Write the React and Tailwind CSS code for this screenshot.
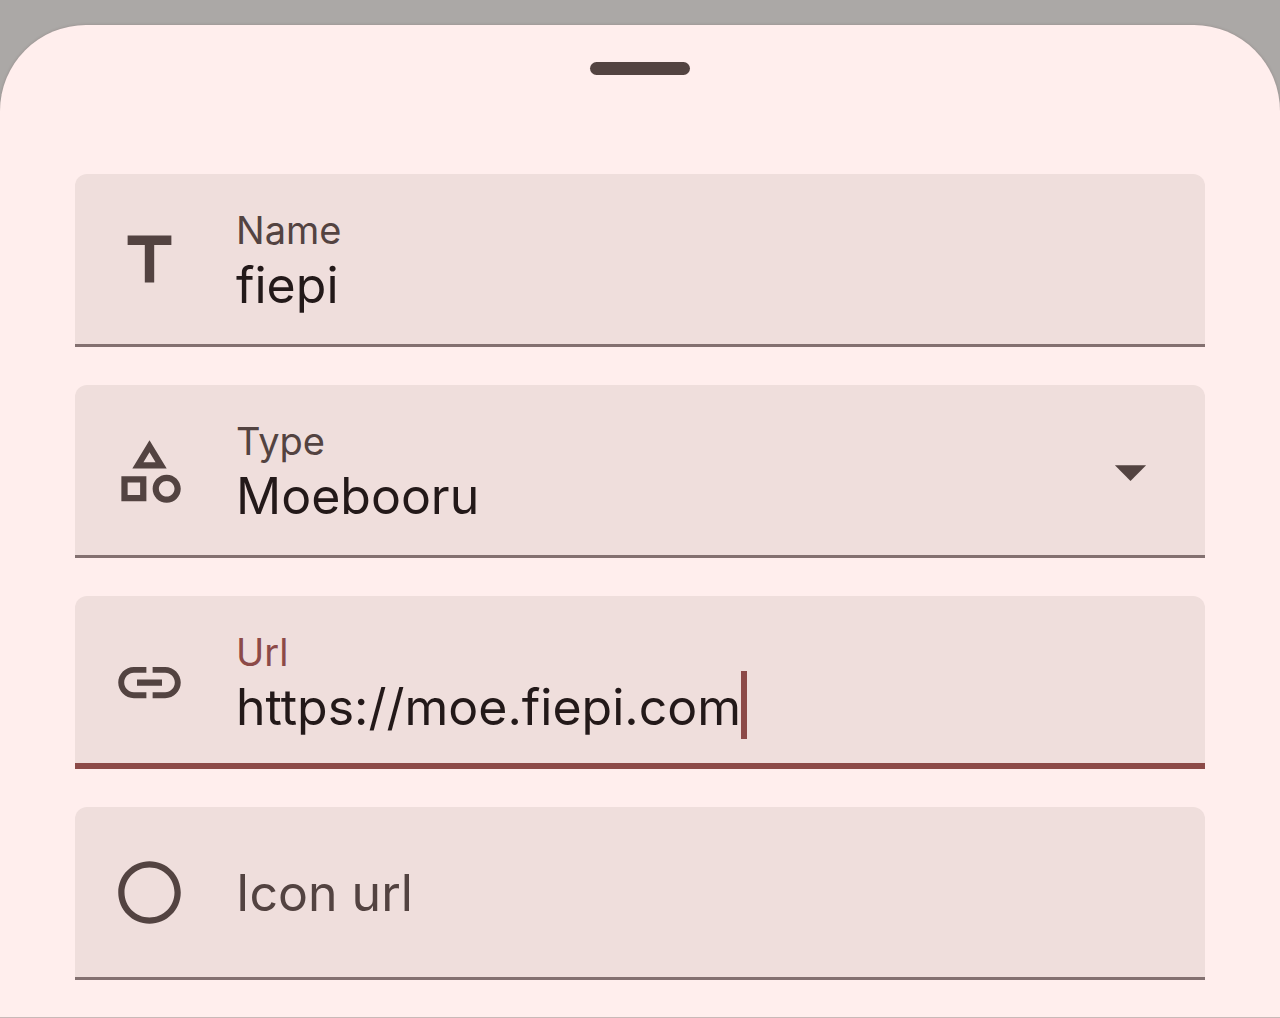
import React from "react";

const ICONS = {
  title: "M5 4v3h5.5v12h3V7H19V4z",
  category:
    "M12 2l-5.5 9h11L12 2zm0 3.84L13.93 9h-3.87L12 5.84zM17.5 13c-2.49 0-4.5 2.01-4.5 4.5s2.01 4.5 4.5 4.5 4.5-2.01 4.5-4.5-2.01-4.5-4.5-4.5zm0 7c-1.38 0-2.5-1.12-2.5-2.5s1.12-2.5 2.5-2.5 2.5 1.12 2.5 2.5-1.12 2.5-2.5 2.5zM3 21.5h8v-8H3v8zm2-6h4v4H5v-4z",
  link: "M3.9 12c0-1.71 1.39-3.1 3.1-3.1h4V7H7c-2.76 0-5 2.24-5 5s2.24 5 5 5h4v-1.9H7c-1.71 0-3.1-1.39-3.1-3.1zM8 13h8v-2H8v2zm9-6h-4v1.9h4c1.71 0 3.1 1.39 3.1 3.1s-1.39 3.1-3.1 3.1h-4V17h4c2.76 0 5-2.24 5-5s-2.24-5-5-5z",
  circle:
    "M12 2C6.47 2 2 6.47 2 12s4.47 10 10 10 10-4.47 10-10S17.53 2 12 2zm0 18c-4.42 0-8-3.58-8-8s3.58-8 8-8 8 3.58 8 8-3.58 8-8 8z",
  arrow: "M7 10l5 5 5-5z",
};

function Icon({ name }) {
  return (
    <svg viewBox="0 0 24 24" className="size-[75px] shrink-0 fill-[#534341]" aria-hidden="true">
      <path d={ICONS[name]} />
    </svg>
  );
}

const valueText = "h-[60px] p-0 text-[50px] leading-[60px] text-[#231919] outline-none";

function Field({ icon, id, label, active, children }) {
  return (
    <div
      className={
        "relative flex h-[173px] rounded-t-xl bg-[#efdedc] px-[37px] " +
        (active
          ? "shadow-[inset_0_-6px_0_#8c4a48]"
          : "shadow-[inset_0_-3px_0_#837070]")
      }
    >
      <div className="flex items-center pb-px">
        <Icon name={icon} />
      </div>
      <div className="ml-[49px] flex min-w-0 flex-1 flex-col pt-8">
        <label
          htmlFor={id}
          className={"text-[38px] leading-[49px] " + (active ? "text-[#8c4a48]" : "text-[#534341]")}
        >
          {label}
        </label>
        {children}
      </div>
    </div>
  );
}

export default function App() {
  return (
    <div className="flex min-h-screen flex-col bg-[#aba8a6] pt-[25px] font-['Inter',sans-serif]">
      <main className="flex flex-1 flex-col rounded-t-[86px] border-b border-[#c9b9b8] bg-[#ffeeed] shadow-[0_0_3px_rgba(80,50,50,0.25)]">
        <div className="mx-auto mt-[37px] h-[13px] w-[100px] rounded-full bg-[#534341]" />
        <form className="mt-[99px] flex flex-col gap-[38px] px-[75px] pb-[37px]">
          <Field icon="title" id="name" label="Name">
            <input id="name" type="text" defaultValue="fiepi" className={valueText + " w-full bg-transparent"} />
          </Field>
          <Field icon="category" id="type" label="Type">
            <select id="type" className={valueText + " w-full appearance-none bg-transparent"}>
              <option>Moebooru</option>
            </select>
            <div className="pointer-events-none absolute inset-y-0 right-[37px] flex items-center pb-px">
              <Icon name="arrow" />
            </div>
          </Field>
          <Field icon="link" id="url" label="Url" active>
            <div className="flex h-[60px] items-center">
              <input
                id="url"
                type="text"
                defaultValue="https://moe.fiepi.com"
                className={valueText + " field-sizing-content max-w-full bg-transparent caret-transparent"}
              />
              <span className="-mt-1 h-[68px] w-[6px] shrink-0 bg-[#8c4a48]" />
            </div>
          </Field>
          <div className="flex h-[173px] items-center rounded-t-xl bg-[#efdedc] px-[37px] pb-[2px] shadow-[inset_0_-3px_0_#837070]">
            <Icon name="circle" />
            <input
              id="icon-url"
              type="text"
              aria-label="Icon url"
              placeholder="Icon url"
              className={valueText + " ml-[49px] min-w-0 flex-1 bg-transparent placeholder:text-[#534341] placeholder:opacity-100"}
            />
          </div>
        </form>
      </main>
    </div>
  );
}
